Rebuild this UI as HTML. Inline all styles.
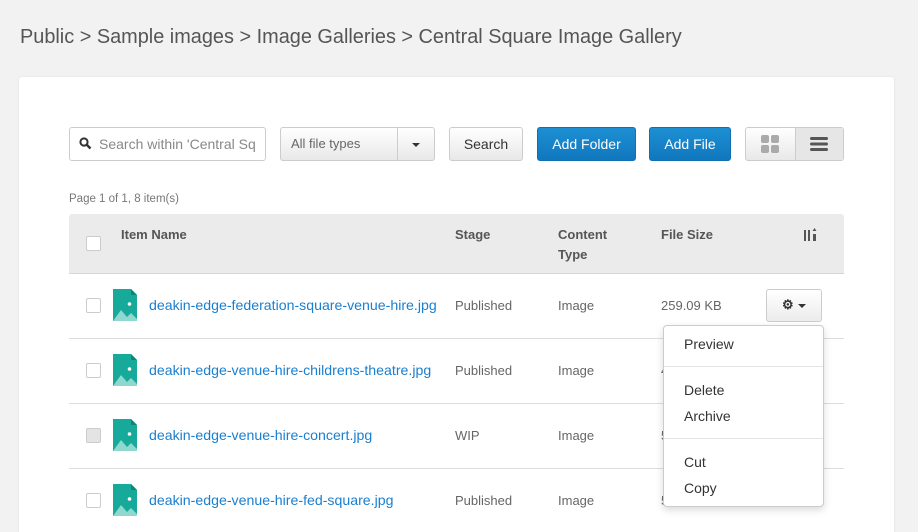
<!DOCTYPE html>
<html><head><style>
*{box-sizing:border-box;margin:0;padding:0}
html,body{width:918px;height:532px;overflow:hidden}
body{background:#f2f2f2;font-family:"Liberation Sans",sans-serif;position:relative;color:#555}
.a{position:absolute}
.crumb{left:20px;top:26px;font-size:19.9px;color:#555}
.card{left:19px;top:77px;width:875px;height:470px;background:#fff;border-radius:3px;box-shadow:0 0 2px rgba(0,0,0,.08)}
.btn{position:absolute;top:127px;height:34px;border-radius:3px;font-size:14px;text-align:center;line-height:32px}
.g{background:linear-gradient(#fff,#e8e8e8);border:1px solid #ccc;color:#333}
.b{background:linear-gradient(#1d8fd3,#1177bd);border:1px solid #1070b3;color:#fff}
.cb{position:absolute;width:15px;height:15px;border:1px solid #ccc;background:#fff;border-radius:2px}
.line{position:absolute;left:69px;width:775px;height:1px;background:#ddd}
.name{position:absolute;left:149px;color:#1a7fcf;font-size:14.15px}
.t{position:absolute;font-size:13px;color:#666}
.h{position:absolute;font-size:13px;font-weight:bold;color:#555;line-height:20px}
.menu{left:663px;top:325px;width:161px;height:182px;background:#fff;border:1px solid #ccc;border-radius:4px;box-shadow:0 3px 8px rgba(0,0,0,.15)}
.mi{position:absolute;left:20px;font-size:14px;color:#333}
.sep{position:absolute;left:0;width:159px;height:1px;background:#e5e5e5}
</style></head><body>
<div class="a crumb">Public &gt; Sample images &gt; Image Galleries &gt; Central Square Image Gallery</div>
<div class="a card"></div>
<div class="a" style="left:69px;top:127px;width:197px;height:34px;border:1px solid #ccc;border-radius:3px"></div>
<svg class="a" style="left:79px;top:137px" width="13" height="13" viewBox="0 0 13 13"><circle cx="5" cy="5" r="3.6" fill="none" stroke="#333" stroke-width="2"/><path d="M7.5 7.5L11.5 11.5" stroke="#333" stroke-width="2.4"/></svg>
<div class="a" style="left:99px;top:136px;font-size:14px;color:#888">Search within 'Central Sq</div>
<div class="btn g" style="left:280px;width:155px;text-align:left;padding-left:10px;color:#666;font-size:13px">All file types</div>
<div class="a" style="left:397px;top:128px;width:1px;height:32px;background:#ccc"></div>
<div class="a" style="left:412px;top:143px;border-left:4px solid transparent;border-right:4px solid transparent;border-top:4px solid #333"></div>
<div class="btn g" style="left:449px;width:74px">Search</div>
<div class="btn b" style="left:537px;width:99px">Add Folder</div>
<div class="btn b" style="left:649px;width:82px">Add File</div>
<div class="btn g" style="left:745px;width:99px"></div>
<div class="a" style="left:795px;top:128px;width:48px;height:32px;background:#e6e6e6;border-left:1px solid #ccc"></div>
<svg class="a" style="left:761px;top:135px" width="18" height="18"><rect x="0" y="0" width="8" height="8" rx="2" fill="#aaa"/><rect x="10" y="0" width="8" height="8" rx="2" fill="#aaa"/><rect x="0" y="10" width="8" height="8" rx="2" fill="#aaa"/><rect x="10" y="10" width="8" height="8" rx="2" fill="#aaa"/></svg>
<svg class="a" style="left:810px;top:137px" width="18" height="14"><rect y="0" width="18" height="3" rx="1.5" fill="#555"/><rect y="5.5" width="18" height="3" rx="1.5" fill="#555"/><rect y="11" width="18" height="3" rx="1.5" fill="#555"/></svg>
<div class="a" style="left:69px;top:193px;font-size:11.5px;color:#777">Page 1 of 1, 8 item(s)</div>
<div class="a" style="left:69px;top:214px;width:775px;height:59px;background:#ebebeb;border-radius:3px 3px 0 0"></div>
<div class="line" style="top:273px;background:#d6d6d6"></div>
<div class="cb" style="left:86px;top:236px"></div>
<div class="h" style="left:121px;top:225px">Item Name</div>
<div class="h" style="left:455px;top:225px">Stage</div>
<div class="h" style="left:558px;top:225px">Content<br>Type</div>
<div class="h" style="left:661px;top:225px">File Size</div>
<svg class="a" style="left:804px;top:228px" width="16" height="14"><rect x="0" y="2" width="2" height="11" fill="#555"/><rect x="4" y="2" width="2" height="11" fill="#555"/><rect x="9" y="6" width="3" height="7" fill="#555"/><path d="M10.5 0L8.5 3H12.5Z" fill="#555"/></svg>
<div class="line" style="top:338px"></div>
<div class="line" style="top:403px"></div>
<div class="line" style="top:468px"></div>
<div class="cb" style="left:86px;top:298px"></div>
<div class="cb" style="left:86px;top:363px"></div>
<div class="cb" style="left:86px;top:428px;background:#e4e4e4"></div>
<div class="cb" style="left:86px;top:493px"></div>
<svg width="0" height="0" style="position:absolute"><defs><g id="ic"><path d="M0 0H18L24 6V32H0Z" fill="#17a99a"/><path d="M18 0L24 6H18Z" fill="#0e8577"/><circle cx="16.5" cy="15" r="1.8" fill="#fff"/><path d="M0 32L8 21L14 28L18 24L24 30V32Z" fill="#8ed8cf"/></g></defs></svg>
<svg class="a" style="left:113px;top:289px" width="24" height="32"><use href="#ic"/></svg>
<svg class="a" style="left:113px;top:354px" width="24" height="32"><use href="#ic"/></svg>
<svg class="a" style="left:113px;top:419px" width="24" height="32"><use href="#ic"/></svg>
<svg class="a" style="left:113px;top:484px" width="24" height="32"><use href="#ic"/></svg>
<div class="name" style="top:297px">deakin-edge-federation-square-venue-hire.jpg</div>
<div class="name" style="top:362px">deakin-edge-venue-hire-childrens-theatre.jpg</div>
<div class="name" style="top:427px">deakin-edge-venue-hire-concert.jpg</div>
<div class="name" style="top:492px">deakin-edge-venue-hire-fed-square.jpg</div>
<div class="t" style="left:455px;top:298px">Published</div>
<div class="t" style="left:455px;top:363px">Published</div>
<div class="t" style="left:455px;top:428px">WIP</div>
<div class="t" style="left:455px;top:493px">Published</div>
<div class="t" style="left:558px;top:298px">Image</div>
<div class="t" style="left:558px;top:363px">Image</div>
<div class="t" style="left:558px;top:428px">Image</div>
<div class="t" style="left:558px;top:493px">Image</div>
<div class="t" style="left:661px;top:298px">259.09 KB</div>
<div class="t" style="left:661px;top:363px">4</div>
<div class="t" style="left:661px;top:428px">5</div>
<div class="t" style="left:661px;top:493px">5</div>
<div class="a" style="left:766px;top:289px;width:56px;height:33px;border:1px solid #ccc;border-radius:3px;background:linear-gradient(#fff,#ececec)"></div>
<div class="a" style="left:782px;top:297px;font-size:13px;color:#333;font-weight:bold">⚙</div>
<div class="a" style="left:798px;top:304px;border-left:4px solid transparent;border-right:4px solid transparent;border-top:4px solid #333"></div>
<div class="a menu">
<div class="mi" style="top:10px">Preview</div>
<div class="sep" style="top:40px"></div>
<div class="mi" style="top:56px">Delete</div>
<div class="mi" style="top:82px">Archive</div>
<div class="sep" style="top:112px"></div>
<div class="mi" style="top:128px">Cut</div>
<div class="mi" style="top:154px">Copy</div>
</div>
</body></html>
